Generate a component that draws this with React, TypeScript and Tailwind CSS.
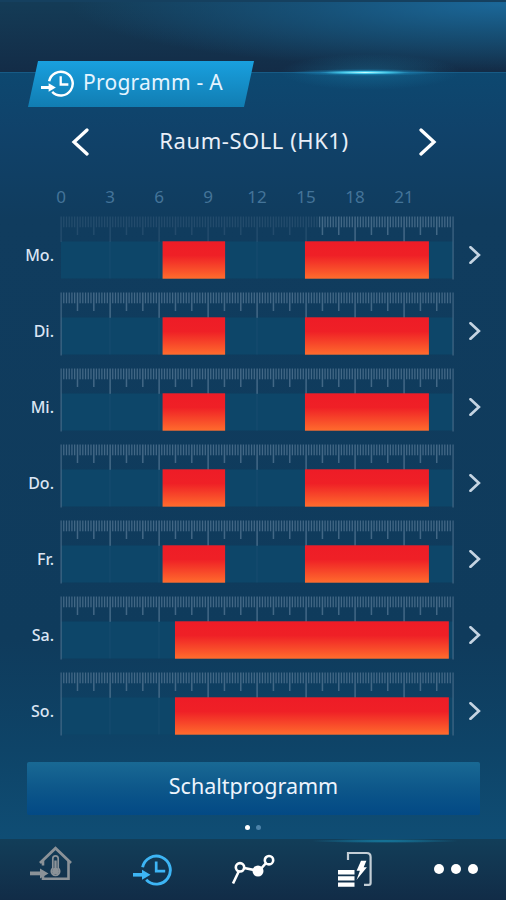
import { ReactNode } from 'react'

type Range = [number, number]

const HOUR = 16.33

const week: { day: string; ranges: Range[]; now?: number }[] = [
  { day: 'Mo.', ranges: [[6.22, 10.05], [14.94, 22.53]], now: 15.8 },
  { day: 'Di.', ranges: [[6.22, 10.05], [14.94, 22.53]] },
  { day: 'Mi.', ranges: [[6.22, 10.05], [14.94, 22.53]] },
  { day: 'Do.', ranges: [[6.22, 10.05], [14.94, 22.53]] },
  { day: 'Fr.', ranges: [[6.22, 10.05], [14.94, 22.53]] },
  { day: 'Sa.', ranges: [[6.98, 23.75]] },
  { day: 'So.', ranges: [[6.98, 23.75]] },
]

function ClockIcon({ className }: { className: string }) {
  return (
    <svg viewBox="0 0 40 34" className={className} fill="none" stroke="currentColor">
      <path d="M9.6 14.3A14 14 0 1 1 13.2 26.8" strokeWidth="2.9" />
      <path d="M23.2 8.5v9.7h9" strokeWidth="2.7" />
      <path d="M0 21.8h9.5" strokeWidth="3.6" />
      <path d="M9 16.8l8.5 5-8.5 5z" fill="currentColor" stroke="none" />
    </svg>
  )
}

function HouseIcon() {
  return (
    <svg width="42" height="35" viewBox="0 0 42 35" className="text-[#8b9298]" fill="none" stroke="currentColor">
      <path d="M10 17L25.5 2.2 41 17" strokeWidth="2.8" />
      <path d="M13 14.5v5M38.5 14.5v18.2H13v-3.5" strokeWidth="2.6" />
      <path d="M0 27.4h11" strokeWidth="3.8" />
      <path d="M10 22.4l8.5 5-8.5 5z" fill="currentColor" stroke="none" />
      <path d="M22.8 12.5a2.7 2.7 0 0 1 5.4 0v9.6a4.2 4.2 0 1 1-5.4 0z" strokeWidth="1.7" />
      <path d="M25.5 14.5v10" strokeWidth="2.4" />
      <circle cx="25.5" cy="25.2" r="3.4" fill="currentColor" stroke="none" />
    </svg>
  )
}

function GraphIcon() {
  return (
    <svg width="44" height="32" viewBox="0 0 44 32" fill="none" stroke="white">
      <path d="M2 29.5L8.2 16.5M12 13.8l15 3M28 17l7.5-8.5" strokeWidth="2.6" />
      <circle cx="9" cy="13.3" r="4.2" strokeWidth="2.6" />
      <circle cx="38" cy="6.2" r="4.2" strokeWidth="2.6" />
      <circle cx="27" cy="17" r="5.5" fill="white" stroke="none" />
    </svg>
  )
}

function EnergyIcon() {
  return (
    <svg width="34" height="36" viewBox="0 0 34 36" fill="none">
      <path d="M10 9V2h18.6q4 0 4 4v26q0 1.8-1.8 1.8H26" stroke="#c3ced6" strokeWidth="2.2" />
      <path d="M0 19h16.5v4.6H0zM0 25.3h16.5v4.3H0zM0 31.4h16.5v4.3H0z" fill="white" />
      <path d="M23 9.7h5.4l-2.7 6.5h3.2L18.5 29l3.4-9.2h-3.3z" fill="white" />
    </svg>
  )
}

function Arrow({ flip, className, width }: { flip?: boolean; className: string; width: number }) {
  return (
    <svg viewBox="0 0 18 28" className={className} fill="none" stroke="currentColor" strokeWidth={width} strokeLinecap="round">
      <path d={flip ? 'M16 2L3 14l13 12' : 'M2 2l13 12L2 26'} />
    </svg>
  )
}

function Ruler({ ranges, now = 0 }: { ranges: Range[]; now?: number }) {
  const ticks = Array.from({ length: 145 }, (_, i) => i)

  return (
    <svg width="394" height="64" viewBox="-1 0 394 64" className="block shrink-0">
      <rect x="0" y="25.5" width="392" height="37" fill="#0d4669" />
      {ticks.map((i) => {
        const hour = i / 6
        const x = hour * HOUR
        const past = hour < now
        const edge = (i === 0 && !past) || i === 144
        const h = edge ? 63 : i % 18 === 0 ? 25.5 : i % 6 === 0 ? 18.5 : 10.8
        return (
          <rect
            key={i}
            x={x - 0.6}
            y="0.5"
            width={i % 6 === 0 ? 1.5 : 1.3}
            height={h}
            fill="#4e718f"
            opacity={past ? 0.3 : edge ? 0.65 : 0.82}
          />
        )
      })}
      {[3, 6, 9, 12, 15, 18, 21].map((h) => (
        <rect key={h} x={h * HOUR - 0.5} y="25.5" width="1" height="37" fill="#184d70" />
      ))}
      {ranges.map(([from, to]) => (
        <rect key={from} x={from * HOUR} y="25.3" width={(to - from) * HOUR} height="37.4" fill="url(#heat)" />
      ))}
    </svg>
  )
}

function TabButton({ children, className }: { children: ReactNode; className: string }) {
  return <button className={`flex h-full items-start ${className}`}>{children}</button>
}

export default function App() {
  return (
    <div className="flex h-[900px] w-[506px] flex-col overflow-hidden bg-[linear-gradient(180deg,#0d4870_72px,#10426a_130px,#103c5e_220px,#0f3b5c_640px,#0e4468_750px,#0f4d74_838px)] font-['Noto_Sans','Open_Sans',sans-serif] text-[#e9eff8]">
      <svg width="0" height="0" className="absolute">
        <defs>
          <linearGradient id="heat" x1="0" y1="0" x2="0" y2="1">
            <stop offset="0" stopColor="#ee1c27" />
            <stop offset="0.38" stopColor="#ef2026" />
            <stop offset="1" stopColor="#ff6c2d" />
          </linearGradient>
        </defs>
      </svg>

      <header className="relative h-[73px] shrink-0 border-b border-[#175b86] bg-[radial-gradient(ellipse_430px_66px_at_500px_4px,#1b6798,#17567fcc_45%,transparent),linear-gradient(180deg,#143c57,#132c47)]">
        <div className="absolute top-0 h-[2px] w-full bg-[#15405f]" />
        <div className="absolute top-[54px] left-[280px] h-[36px] w-[180px] bg-[radial-gradient(ellipse_closest-side,#1a83b060,transparent)]" />
        <div className="absolute top-[69px] left-[290px] h-[7px] w-[150px] bg-[radial-gradient(ellipse_closest-side,#c6ffff,#44c6e8_30%,#1c83b580_60%,transparent)]" />
      </header>

      <div className="relative -mt-3 ml-[28px] flex h-[46px] w-[226px] shrink-0 items-start bg-linear-to-b from-[#19a0df] to-[#117db2] pl-[13px] [clip-path:polygon(10px_0,100%_0,216px_100%,0_100%)]">
        <ClockIcon className="mt-[8px] h-[29px] w-[34px] text-white" />
        <h1 className="ml-[8px] text-[21px] leading-[43px] tracking-[0.25px] whitespace-nowrap text-[#e4f4ff]">Programm - A</h1>
      </div>

      <div className="flex h-[70px] shrink-0 items-center justify-between pr-[69px] pl-[71px]">
        <Arrow flip className="h-[28px] w-[18px] text-white" width={3.3} />
        <h2 className="mb-[5px] text-[22px] leading-[30px] tracking-[0.55px] whitespace-nowrap">Raum-SOLL (HK1)</h2>
        <Arrow className="h-[28px] w-[18px] text-white" width={3.3} />
      </div>

      <div className="mt-[9px] ml-[36.5px] flex h-[22px] shrink-0 text-center text-[17px] leading-[22px] text-[#447499]">
        {[0, 3, 6, 9, 12, 15, 18, 21].map((h) => (
          <span key={h} className="w-[49px]">{h}</span>
        ))}
      </div>

      <div className="mt-[8px] shrink-0">
        {week.map(({ day, ranges, now }) => (
          <div key={day} className="flex h-[75.95px] items-start">
            <span className="mt-[28px] w-[54px] text-right text-[16px] leading-[22px] font-medium text-[#dbe5f3]">{day}</span>
            <div className="ml-[6px]">
              <Ruler ranges={ranges} now={now} />
            </div>
            <Arrow className="mt-[30px] ml-[14.5px] h-[18px] w-[12px] text-[#c5d4e2]" width={4.2} />
          </div>
        ))}
      </div>

      <button className="mt-[14px] ml-[27px] h-[53px] w-[453px] shrink-0 rounded-[2px] bg-linear-to-b from-[#196994] via-[#0d578a] to-[#034985] pb-1 text-[21.5px] text-[#edf4fd]">
        Schaltprogramm
      </button>

      <div className="mt-[10px] ml-[245px] flex shrink-0 gap-[6px]">
        <span className="size-[5px] rounded-full bg-white" />
        <span className="size-[5px] rounded-full bg-[#4d83a9]" />
      </div>

      <nav className="relative mt-auto flex h-[61px] shrink-0 bg-linear-to-b from-[#123e59] to-[#112c47]">
        <div className="absolute top-0 left-[310px] h-[4px] w-[150px] bg-[radial-gradient(ellipse_closest-side,#1681a8,transparent)]" />
        <TabButton className="w-[133px] pt-[7px] pl-[30px]">
          <HouseIcon />
        </TabButton>
        <TabButton className="w-[98px] pt-[14px]">
          <ClockIcon className="h-[34px] w-[40px] text-[#3db5f5]" />
        </TabButton>
        <TabButton className="w-[107px] pt-[15px]">
          <GraphIcon />
        </TabButton>
        <TabButton className="w-[96px] pt-[12px]">
          <EnergyIcon />
        </TabButton>
        <TabButton className="gap-[7px] pt-[25px]">
          <span className="size-[10px] rounded-full bg-white" />
          <span className="size-[10px] rounded-full bg-white" />
          <span className="size-[10px] rounded-full bg-white" />
        </TabButton>
      </nav>
    </div>
  )
}
